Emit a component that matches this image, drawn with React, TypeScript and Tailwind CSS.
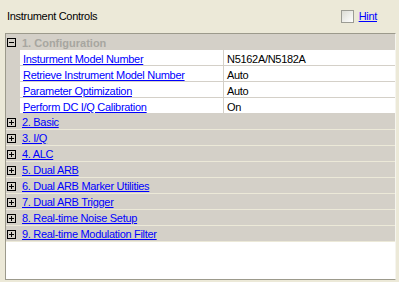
const settings = [
  { name: 'Insturment Model Number', value: 'N5162A/N5182A' },
  { name: 'Retrieve Instrument Model Number', value: 'Auto' },
  { name: 'Parameter Optimization', value: 'Auto' },
  { name: 'Perform DC I/Q Calibration', value: 'On' },
];

const groups = [
  '2. Basic',
  '3. I/Q',
  '4. ALC',
  '5. Dual ARB',
  '6. Dual ARB Marker Utilities',
  '7. Dual ARB Trigger',
  '8. Real-time Noise Setup',
  '9. Real-time Modulation Filter',
];

function TreeBox({ open }: { open: boolean }) {
  return (
    <div className="relative ml-[1px] mt-[4px] w-[9px] h-[9px] border border-black shrink-0">
      <div className="absolute left-[1px] top-[3px] w-[5px] h-[1px] bg-black" />
      {!open && <div className="absolute left-[3px] top-[1px] w-[1px] h-[5px] bg-black" />}
    </div>
  );
}

export default function App() {
  return (
    <div
      className="w-[399px] h-[282px] bg-[#ece9d8] text-[11px] text-black overflow-hidden"
      style={{ fontFamily: '"Liberation Sans", Arial, sans-serif' }}
    >
      {/* Title bar */}
      <div className="h-[33px] flex items-start justify-between pl-[7px] pr-[22px]">
        <span className="pt-[10px] leading-[13px] tracking-[-0.3px]">Instrument Controls</span>
        <div className="flex items-start pt-[10px]">
          <div className="w-[13px] h-[13px] border border-[#9c9c94] bg-gradient-to-br from-[#dcdcd4] to-white mr-[5px]" />
          <a className="leading-[13px] text-[#0000ff] underline tracking-[-0.3px]">Hint</a>
        </div>
      </div>

      {/* Property grid */}
      <div className="ml-[5px] w-[391px] h-[247px] flex flex-col border-l border-t border-b border-r border-l-[#9c9a8c] border-t-[#9c9a8c] border-b-[#9c9a8c] border-r-[#f6f5ef] bg-white">
        {/* Expanded category */}
        <div className="h-[16px] flex bg-[#d4d0c8] shrink-0">
          <TreeBox open />
          <span className="pl-[6px] pt-[3px] leading-[13px] font-bold text-[#a7a6a0]">1. Configuration</span>
        </div>

        {settings.map((s) => (
          <div key={s.name} className="h-[16px] flex shrink-0">
            <div className="w-[14px] bg-[#d4d0c8] shrink-0" />
            <div className="w-[203px] border-b border-[#d4d0c8] pl-[3px] pt-[3px] leading-[12px] shrink-0">
              <a className="text-[#0000ff] underline tracking-[-0.3px] whitespace-nowrap">{s.name}</a>
            </div>
            <div className="flex-1 border-l border-b border-[#d4d0c8] pl-[3px] pt-[3px] leading-[12px] tracking-[-0.3px]">
              {s.value}
            </div>
          </div>
        ))}

        {groups.map((g) => (
          <div key={g} className="h-[16px] flex bg-[#d4d0c8] border-b border-[#ece9d8] shrink-0">
            <TreeBox open={false} />
            <span className="pl-[6px] pt-[2px] leading-[13px]">
              <a className="text-[#0000ff] underline tracking-[-0.3px] whitespace-nowrap">{g}</a>
            </span>
          </div>
        ))}

        <div className="flex-1 bg-white" />
      </div>
    </div>
  );
}
